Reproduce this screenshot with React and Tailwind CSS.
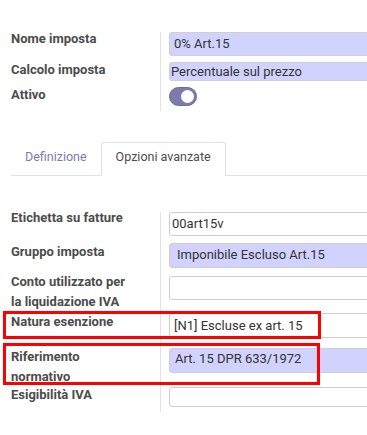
const Field = ({ children, className = "" }) => (
  <div
    className={`w-[230px] rounded-[3px] border border-[#cfcfcf] text-[13px] text-[#333333] whitespace-nowrap ${className}`}
  >
    {children}
  </div>
);

const Toggle = () => (
  <div className="w-[28px] h-[19px] rounded-full bg-[#7c7bad] border border-[#6a6899] flex items-center justify-end pr-[2px]">
    <div className="w-[13px] h-[13px] rounded-full bg-white" />
  </div>
);

const Row = ({ label, labelClass = "", cellClass = "", children }) => (
  <div className="flex">
    <div
      className={`w-[160px] shrink-0 pl-[11px] font-bold text-[13px] leading-[20px] text-[#4c4c4c] ${labelClass}`}
    >
      {label}
    </div>
    <div className={`flex-1 border-l border-[#e2e2e2] pl-[8px] ${cellClass}`}>
      {children}
    </div>
  </div>
);

export default function App() {
  return (
    <div
      className="relative w-[367px] h-[435px] overflow-hidden bg-white"
      style={{ fontFamily: "Roboto, 'Liberation Sans', sans-serif" }}
    >
      {/* main fields */}
      <div className="pt-[32px]">
        <Row label="Nome imposta" labelClass="-mt-[3px]" cellClass="h-[30px]">
          <Field className="h-[24px] pl-[4px] pt-[1px] leading-[20px] bg-[#d2d2ff]">
            0% Art.15
          </Field>
        </Row>
        <Row label="Calcolo imposta" labelClass="-mt-[2px]" cellClass="h-[25px]">
          <Field className="h-[19px] pl-[1px] leading-[17px] bg-[#d2d2ff]">
            Percentuale sul prezzo
          </Field>
        </Row>
        <Row label="Attivo" labelClass="-mt-[2px]" cellClass="h-[24px]">
          <Toggle />
        </Row>
      </div>

      {/* tabs */}
      <div className="mt-[31px] ml-[11px] flex border-b border-[#dee2e6] text-[12.5px] leading-[20px]">
        <div className="-mb-px border border-transparent px-[13px] pt-[4px] pb-[8px] text-[#7c7bad]">
          Definizione
        </div>
        <div className="-mb-px border border-[#dee2e6] border-b-white bg-white rounded-t-[3px] px-[14px] pt-[4px] pb-[8px] text-[#4c4c4c]">
          Opzioni avanzate
        </div>
      </div>

      {/* advanced options */}
      <div className="pt-[36px]">
        <Row label="Etichetta su fatture" labelClass="-mt-[4px]" cellClass="h-[31px]">
          <Field className="h-[24px] pl-[2px] pt-[1px] leading-[20px] bg-white">
            00art15v
          </Field>
        </Row>
        <Row label="Gruppo imposta" labelClass="-mt-[1px]" cellClass="h-[33px]">
          <Field className="h-[25px] pl-[7px] leading-[22px] bg-[#d2d2ff]">
            Imponibile Escluso Art.15
          </Field>
        </Row>
        <Row
          label={
            <>
              Conto utilizzato per
              <br />
              la liquidazione IVA
            </>
          }
          labelClass="-mt-[4px]"
          cellClass="h-[36px]"
        >
          <Field className="h-[24px] bg-white" />
        </Row>
        <Row label="Natura esenzione" cellClass="h-[31px] pt-[1px]">
          <Field className="h-[25px] pl-[4px] pt-[2px] leading-[20px] bg-white">
            [N1] Escluse ex art. 15
          </Field>
        </Row>
        <Row
          label={
            <>
              Riferimento
              <br />
              normativo
            </>
          }
          labelClass="mt-[4px] leading-[18px]"
          cellClass="h-[44px] pt-[5px]"
        >
          <Field className="h-[25px] pl-[5px] leading-[20px] bg-[#d2d2ff]">
            Art. 15 DPR 633/1972
          </Field>
        </Row>
        <Row label="Esigibilità IVA" labelClass="-mt-[2px]" cellClass="h-[25px]">
          <Field className="h-[20px] bg-white" />
        </Row>
      </div>

      {/* annotation boxes */}
      <div className="absolute left-[3px] top-[311px] w-[318px] h-[28px] border-[3px] border-[#ff0000]" />
      <div className="absolute left-[3px] top-[343px] w-[317px] h-[42px] border-[3px] border-[#ff0000]" />
    </div>
  );
}
